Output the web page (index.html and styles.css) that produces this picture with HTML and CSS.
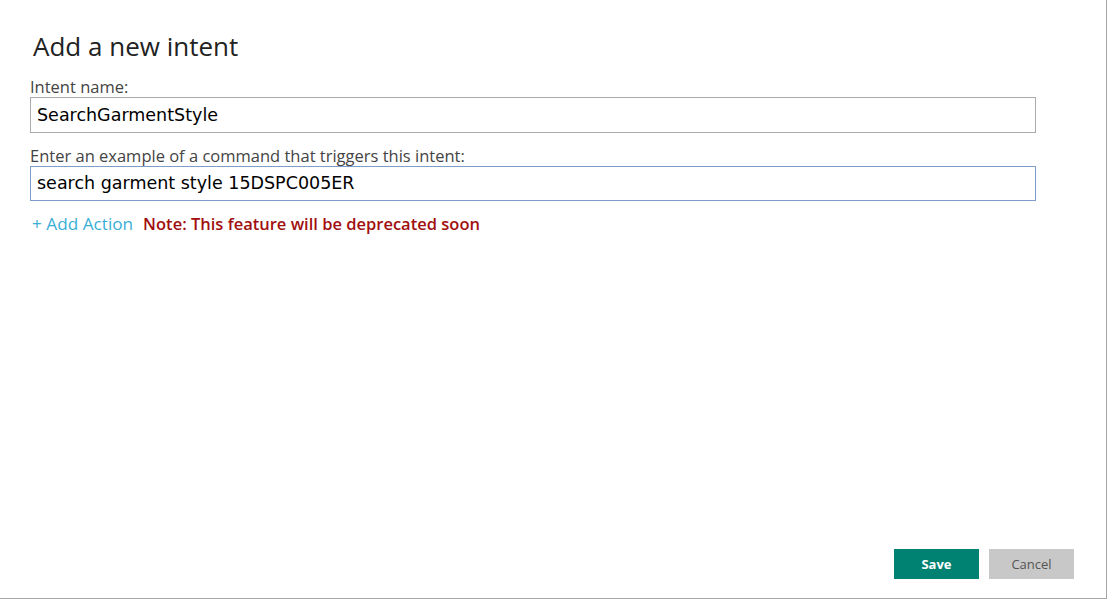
FILE: index.html
```html
<!DOCTYPE html>
<html>
<head>
<meta charset="utf-8">
<link rel="stylesheet" href="styles.css">
</head>
<body>
<div class="panel">
  <h1 class="title">Add a new intent</h1>
  <label class="label">Intent name:</label>
  <div class="input">SearchGarmentStyle</div>
  <label class="label label-2">Enter an example of a command that triggers this intent:</label>
  <div class="input input-focus">search garment style 15DSPC005ER</div>
  <div class="actions-row">
    <span class="add-action">+ Add Action</span>
    <span class="note">Note: This feature will be deprecated soon</span>
  </div>
  <div class="spacer"></div>
  <div class="buttons">
    <button class="btn btn-save">Save</button>
    <button class="btn btn-cancel">Cancel</button>
  </div>
</div>
</body>
</html>
```
FILE: styles.css
```css
html, body {
  margin: 0;
  padding: 0;
  background: #fff;
}
.panel {
  box-sizing: border-box;
  width: 1107px;
  height: 599px;
  border-right: 1px solid #a6a6a6;
  border-bottom: 1px solid #a6a6a6;
  padding: 0 0 0 30px;
  display: flex;
  flex-direction: column;
  font-family: "Open Sans", "Noto Sans", sans-serif;
  color: #444;
}
.title {
  margin: 29px 0 0 3px;
  font-size: 26px;
  font-weight: 400;
  line-height: 34px;
  color: #222;
}
.label {
  margin-top: 14px;
  font-size: 16.5px;
  line-height: 20px;
  color: #444;
}
.label-2 {
  margin-top: 13px;
}
.input {
  box-sizing: border-box;
  width: 1006px;
  height: 36px;
  border: 1px solid #ababab;
  padding: 0 0 0 6px;
  font-family: "DejaVu Sans", Verdana, sans-serif;
  font-size: 17.5px;
  line-height: 34px;
  color: #000;
}
.input-focus {
  height: 35px;
  border-color: #7f9dc9;
  line-height: 33px;
}
.actions-row {
  margin-top: 12px;
  display: flex;
  gap: 10px;
  align-items: baseline;
  line-height: 22px;
}
.add-action {
  margin-left: 2px;
  font-size: 17.2px;
  color: #3aafd6;
}
.note {
  font-size: 16.5px;
  font-weight: 600;
  color: #a10f0f;
}
.spacer {
  flex: 1;
}
.buttons {
  display: flex;
  justify-content: flex-end;
  gap: 10px;
  padding-right: 32px;
  margin-bottom: 19px;
}
.btn {
  width: 85px;
  height: 30px;
  border: none;
  font-family: "Open Sans", "Noto Sans", sans-serif;
  font-size: 13px;
  padding: 0;
  cursor: pointer;
}
.btn-save {
  background: #008272;
  color: #fff;
  font-weight: 700;
}
.btn-cancel {
  background: #c8c8c8;
  color: #555;
}
```
